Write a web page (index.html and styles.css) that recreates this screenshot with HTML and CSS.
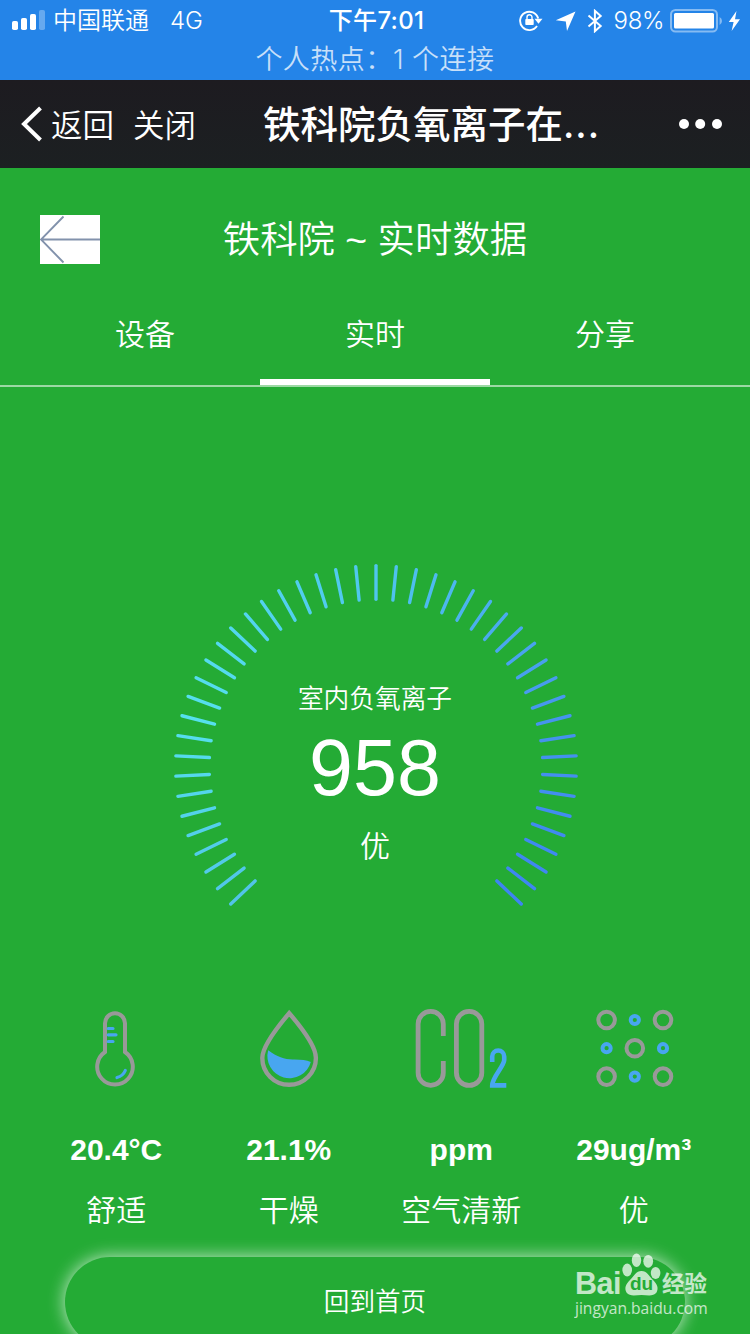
FILE: index.html
```html
<!DOCTYPE html>
<html lang="zh-CN">
<head>
  <meta charset="UTF-8" />
  <meta name="viewport" content="width=device-width, initial-scale=1.0"/>
  <title>铁科院负氧离子在线监测</title>
  <link rel="stylesheet" href="styles.css">
</head>
<body>
  <div class="status-bar">
    <div class="status-row">
      <div class="status-left">
        <svg class="signal" width="34" height="20" viewBox="0 0 34 20" fill="#fff">
          <rect x="0" y="11" width="6" height="9" rx="1.8"/>
          <rect x="9" y="8" width="6" height="12" rx="1.8"/>
          <rect x="18" y="4" width="6" height="16" rx="1.8"/>
          <rect x="27" y="0" width="6" height="20" rx="1.8" opacity="0.3"/>
        </svg>
        <span class="carrier">中国联通</span>
        <span class="network">4G</span>
      </div>
      <div class="time">下午7:01</div>
      <div class="status-right">
        <svg width="24" height="22" viewBox="0 0 24 22" fill="none" stroke="#fff" stroke-width="1.9">
          <path d="M18 16 A9.2 9.2 0 1 1 19.2 8.5"/>
          <path d="M15.5 8.8 h8 l-4 5z" fill="#fff" stroke="none"/>
          <rect x="6.3" y="9" width="8.4" height="6" rx="0.8" fill="#fff" stroke="none"/>
          <path d="M8 9.5 V7.2 a2.5 2.5 0 0 1 5 0 V9.5" stroke-width="1.4"/>
        </svg>
        <svg class="location" width="21" height="21" viewBox="0 0 21 21" fill="#fff">
          <path d="M20.5 0.5 L12 20 L10.8 10.4 L0.8 9.2z"/>
        </svg>
        <svg class="bluetooth" width="16" height="24" viewBox="0 0 16 24" fill="none" stroke="#fff" stroke-width="2">
          <path d="M1.5 6.5 L13.7 17 L7.9 22.2 V1.8 L13.7 7 L1.5 17.5"/>
        </svg>
        <span class="battery-text">98%</span>
        <svg class="battery" width="53" height="24" viewBox="0 0 53 24">
          <rect x="1" y="1" width="46" height="21.5" rx="4.5" fill="none" stroke="#fff" stroke-opacity="0.45" stroke-width="2"/>
          <rect x="4" y="4" width="40" height="15.5" rx="1.5" fill="#fff"/>
          <path d="M49.6 8 a4.5 4.5 0 0 1 0 8z" fill="#fff" opacity="0.45"/>
        </svg>
        <svg class="bolt" width="13" height="20" viewBox="0 0 13 20" fill="#fff">
          <path d="M8.5 0 L0.8 11 H5.6 L3.6 20 L12 8.2 H7z"/>
        </svg>
      </div>
    </div>
    <div class="hotspot">个人热点：<span>1 个连接</span></div>
  </div>

  <div class="nav-bar">
    <div class="nav-left">
      <svg width="22" height="36" viewBox="0 0 22 36" fill="none" stroke="#fff" stroke-width="4">
        <path d="M19.5 2 L3 18 L19.5 34"/>
      </svg>
      <span class="nav-back">返回</span>
      <span class="nav-close">关闭</span>
    </div>
    <div class="nav-title">铁科院负氧离子在<span class="dots">...</span></div>
    <svg class="nav-more" width="44" height="10" viewBox="0 0 44 10" fill="#fff">
      <circle cx="5" cy="5" r="5"/>
      <circle cx="21.2" cy="5" r="5"/>
      <circle cx="38" cy="5" r="5"/>
    </svg>
  </div>

  <div class="header">
    <svg class="back-icon" width="60" height="49" viewBox="0 0 60 49">
      <rect width="60" height="49" fill="#fff"/>
      <path d="M23.5 1.5 L1 24.5 L23.5 47.5 M1 24.5 H60" fill="none" stroke="#8292ac" stroke-width="1.9"/>
    </svg>
    <h1>铁科院 ~ 实时数据</h1>
  </div>

  <div class="tabs">
    <div class="tab">设备</div>
    <div class="tab active">实时</div>
    <div class="tab">分享</div>
  </div>

  <div class="gauge">
    <svg class="ticks" id="ticks" viewBox="0 0 410 410"></svg>
    <div class="gauge-label">室内负氧离子</div>
    <div class="gauge-value">958</div>
    <div class="gauge-level">优</div>
  </div>

  <div class="metrics">
    <div class="metric">
      <svg width="100" height="90" viewBox="0 0 100 90" fill="none" stroke="#999" stroke-width="4">
        <path d="M39 49 V20.3 a10 10 0 0 1 20 0 V49 A17.8 17.8 0 1 1 39 49z"/>
        <g stroke="#48a6f0" stroke-width="3.2" stroke-linecap="round">
          <path d="M42.2 25.5 H47 M42.2 31.8 H50 M42.2 38.5 H47"/>
          <path d="M51 74.5 Q57 73 59.3 67.5"/>
        </g>
      </svg>
      <div class="value">20.4°C</div>
      <div class="level">舒适</div>
    </div>
    <div class="metric">
      <svg width="100" height="90" viewBox="0 0 100 90" fill="none" stroke="#999" stroke-width="4.4">
        <path d="M50.2 10.2 C41 21 23.3 42 23.3 55 a26.8 26.8 0 0 0 53.6 0 C77 42 59.5 21 50.2 10.2z"/>
        <path d="M29.2 47.3 C38 54 46 56.6 54 56.5 S67 57 71.8 59 A22 22 0 1 1 29.2 47.3z" fill="#48a6f0" stroke="none"/>
      </svg>
      <div class="value">21.1%</div>
      <div class="level">干燥</div>
    </div>
    <div class="metric">
      <svg width="100" height="90" viewBox="0 0 100 90" fill="none" stroke="#999" stroke-width="4.8">
        <path d="M32.3 33 V21 a12.6 12.6 0 0 0 -25.2 0 V69.7 a12.6 12.6 0 0 0 25.2 0 V58"/>
        <rect x="45.4" y="8.4" width="25.4" height="74" rx="12.7"/>
        <path d="M81.2 59 V53.5 a6 6 0 0 1 12 0 V57 C93.2 63 81.2 74 81.2 82.4 H95.3" stroke="#48a6f0" stroke-width="4.6"/>
      </svg>
      <div class="value">ppm</div>
      <div class="level">空气清新</div>
    </div>
    <div class="metric">
      <svg width="100" height="90" viewBox="0 0 100 90" fill="none" stroke="#999" stroke-width="4">
        <circle cx="22.6" cy="17" r="8.3"/>
        <circle cx="79" cy="17" r="8.3"/>
        <circle cx="50.8" cy="45.2" r="8.3"/>
        <circle cx="22.6" cy="73.6" r="8.3"/>
        <circle cx="79" cy="73.6" r="8.3"/>
        <g stroke="#48a6f0">
          <circle cx="50.8" cy="17" r="4.1"/>
          <circle cx="22.6" cy="45.2" r="4.1"/>
          <circle cx="79" cy="45.2" r="4.1"/>
          <circle cx="50.8" cy="73.6" r="4.1"/>
        </g>
      </svg>
      <div class="value">29ug/m³</div>
      <div class="level">优</div>
    </div>
  </div>

  <div class="home-btn">回到首页</div>

  <div class="watermark">
    <div class="wm-logo">
      <span class="wm-bai">Bai</span>
      <div class="wm-paw">
        <svg width="40" height="44" viewBox="0 0 40 44" fill="#fff">
          <ellipse cx="6.2" cy="17" rx="4.8" ry="6.4"/>
          <ellipse cx="15.5" cy="7.3" rx="4.7" ry="6.8"/>
          <ellipse cx="27.2" cy="8.3" rx="4.9" ry="6.4"/>
          <ellipse cx="34.6" cy="20" rx="4.8" ry="6"/>
          <path d="M20.5 18 C26 18 28 23 32 27 C36 31 38 35 35.5 39.5 C32 44 26 42 20.5 42 S9 44 5.5 39.5 C3 35 5 31 9 27 C13 23 15 18 20.5 18z"/>
        </svg>
        <span class="wm-du">du</span>
      </div>
      <span class="wm-cn">经验</span>
    </div>
    <div class="wm-url">jingyan.baidu.com</div>
  </div>

  <script>
  // 47 ticks, 62 to a full turn, gap at the bottom
  const stops = [
    [0, [82, 196, 232]],
    [10, [86, 224, 238]],
    [23, [80, 198, 238]],
    [36, [70, 148, 238]],
    [46, [62, 132, 242]]
  ];

  function tickColor(i) {
    let k = 0;
    while (k < stops.length - 2 && i > stops[k + 1][0]) k++;
    const [a, from] = stops[k];
    const [b, to] = stops[k + 1];
    const t = (i - a) / (b - a);
    return "rgb(" + from.map((c, n) => Math.round(c + (to[n] - c) * t)).join(",") + ")";
  }

  let lines = "";
  for (let i = 0; i < 47; i++) {
    const angle = (i - 23) * 360 / 62;
    lines += `<line x1="205" y1="4.6" x2="205" y2="38.2" stroke="${tickColor(i)}" transform="rotate(${angle} 205 205)"/>`;
  }
  document.getElementById("ticks").innerHTML = lines;
  </script>
</body>
</html>
```

FILE: styles.css
```css
* {
  box-sizing: border-box;
}

body {
  margin: 0;
  height: 1334px;
  overflow: hidden;
  position: relative;
  background: #24ab35;
  color: #fff;
  font-family: "Liberation Sans", "Noto Sans CJK SC", sans-serif;
  font-weight: 350;
}

svg {
  display: block;
  flex-shrink: 0;
}

.status-bar {
  height: 80px;
  background: #2484e8;
  font-family: Inter, "Noto Sans CJK SC", sans-serif;
}

.status-row {
  display: grid;
  grid-template-columns: 1fr auto 1fr;
  height: 41px;
  font-size: 24px;
  line-height: 42px;
}

.status-left {
  display: flex;
  padding-left: 12px;
}

.signal {
  margin-top: 10px;
}

.carrier {
  margin-left: 7px;
}

.network {
  margin-left: 21px;
}

.time {
  font-weight: 500;
  padding-left: 3px;
  letter-spacing: 0.3px;
}

.status-right {
  display: flex;
  align-items: center;
  justify-content: flex-end;
  padding-right: 9px;
}

.location {
  margin-left: 12px;
}

.bluetooth {
  margin-left: 11px;
}

.battery-text {
  margin-left: 11px;
  letter-spacing: -0.4px;
}

.battery {
  margin-left: 6px;
}

.bolt {
  margin-left: 5px;
}

.hotspot {
  font-size: 27px;
  line-height: 37px;
  letter-spacing: 0.5px;
  text-align: center;
  color: rgba(255, 255, 255, 0.75);
}

.nav-bar {
  display: grid;
  grid-template-columns: 263px 1fr auto;
  align-items: center;
  height: 88px;
  padding-right: 27px;
  background: linear-gradient(#1d1b20, #1c2022);
  font-family: Inter, "Noto Sans CJK SC", sans-serif;
}

.nav-left {
  display: flex;
  align-items: center;
  padding-left: 21px;
  font-size: 31.5px;
  line-height: 44px;
}

.nav-back,
.nav-close {
  padding-top: 3px;
}

.nav-back {
  margin-left: 8px;
}

.nav-close {
  margin-left: 19px;
}

.nav-title {
  font-size: 37.5px;
  line-height: 56px;
  padding-top: 1px;
  font-weight: 500;
}

.dots {
  letter-spacing: 1px;
}

.header {
  display: flex;
  align-items: center;
  height: 142px;
  padding: 0 40px;
}

h1 {
  flex: 1;
  margin: 0 60px 5px 0;
  text-align: center;
  font-size: 37.4px;
  font-weight: 350;
}

.tabs {
  display: flex;
  height: 77px;
  padding: 0 30px;
  border-bottom: 2px solid rgba(255, 255, 255, 0.55);
}

.tab {
  width: 230px;
  text-align: center;
  font-size: 30px;
  line-height: 50px;
}

.tab.active {
  border-bottom: 6px solid #fff;
}

.gauge {
  position: relative;
  width: 410px;
  height: 410px;
  margin: 174px auto 0;
  left: 1px;
  padding: 120px 2px 0 0;
  text-align: center;
}

.ticks {
  position: absolute;
  inset: 0;
  stroke-width: 3.4;
  stroke-linecap: round;
}

.gauge-label {
  font-size: 25.7px;
  line-height: 36px;
}

.gauge-value {
  font-size: 79px;
  line-height: 90px;
  margin-top: 6px;
}

.gauge-level {
  font-size: 30px;
  line-height: 44px;
  margin-top: 12px;
}

.metrics {
  display: flex;
  padding: 0 30px;
  margin-top: 32px;
}

.metric {
  flex: 1;
  display: flex;
  flex-direction: column;
  align-items: center;
}

.value {
  margin-top: 39px;
  font-size: 30px;
  line-height: 36px;
  font-weight: bold;
}

.level {
  margin-top: 21px;
  font-size: 30px;
  line-height: 44px;
}

.home-btn {
  width: 620px;
  height: 90px;
  margin: 24px auto 0;
  border-radius: 45px;
  box-shadow: 0 0 17px rgba(255, 255, 255, 0.75);
  text-align: center;
  font-size: 25.6px;
  line-height: 90px;
}

.watermark {
  position: absolute;
  left: 575px;
  top: 1253px;
  opacity: 0.72;
  font-weight: bold;
}

.wm-logo {
  display: flex;
  align-items: flex-end;
  height: 44px;
}

.wm-bai {
  font-size: 30.5px;
  line-height: 32px;
  height: 30px;
  letter-spacing: -0.5px;
}

.wm-paw {
  position: relative;
  margin-left: 0;
}

.wm-du {
  position: absolute;
  left: 9px;
  top: 21px;
  font-size: 19px;
  line-height: 20px;
  color: #24ab35;
}

.wm-cn {
  margin-left: 1px;
  height: 27px;
  font-size: 22.5px;
  line-height: 30px;
}

.wm-url {
  padding-top: 1px;
  font-family: "Open Sans", sans-serif;
  font-weight: 500;
  font-size: 15.6px;
  line-height: 20px;
}
```
